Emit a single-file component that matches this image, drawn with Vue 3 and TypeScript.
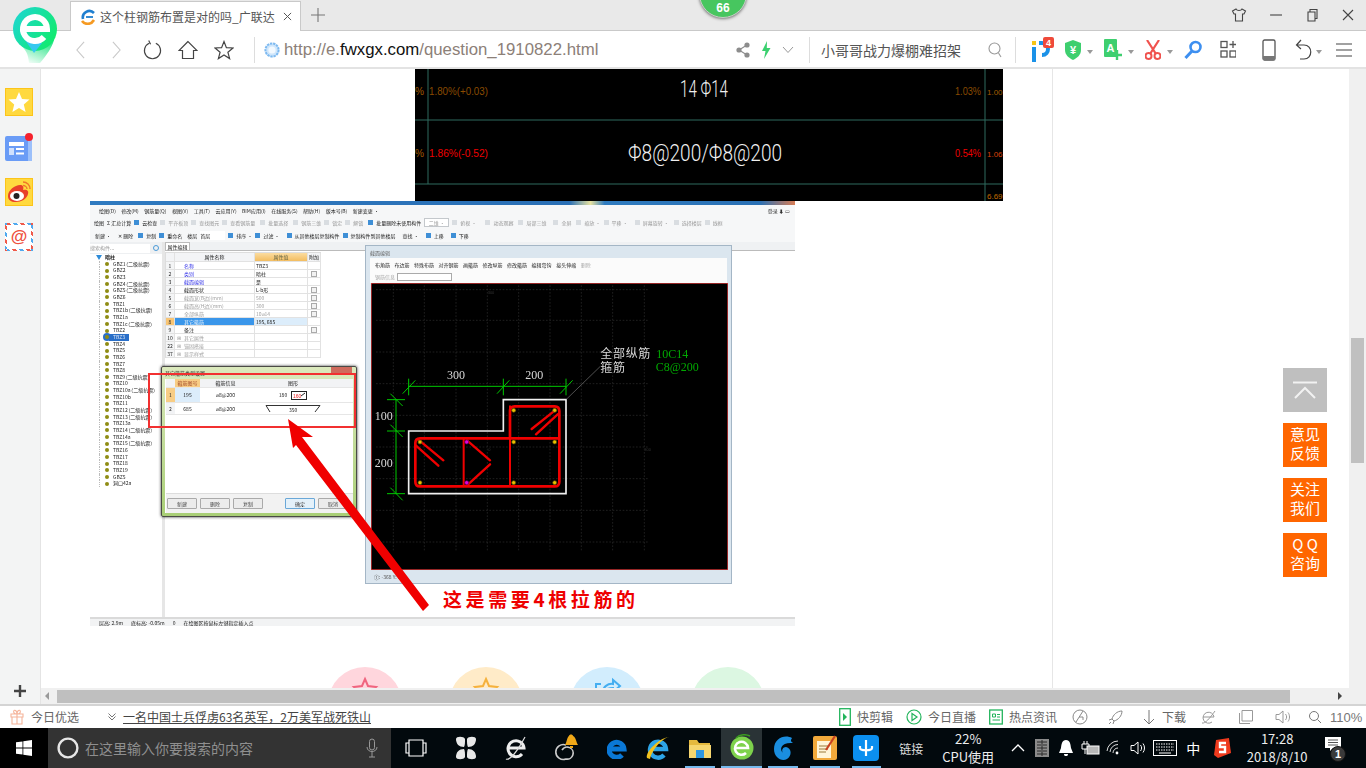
<template>
  <div class="browser">
    <!-- tab strip -->
    <header class="tabstrip">
      <div class="tab">
        <svg class="favicon" viewBox="0 0 16 16" width="16" height="16">
          <path d="M3 10A6.5 6.5 0 0 1 14 4" fill="none" stroke="#1f7fd0" stroke-width="2.6" />
          <path d="M2 12C5 16 11 16 14 11" fill="none" stroke="#f59a23" stroke-width="2.6" />
          <path d="M6 8H13" stroke="#1f7fd0" stroke-width="1.8" />
        </svg>
        <span class="tab-title">这个柱钢筋布置是对的吗_广联达</span>
        <svg class="tab-x" viewBox="0 0 10 10" width="9" height="9"><path d="M1 1L9 9M9 1L1 9" stroke="#555" stroke-width="1.1" /></svg>
      </div>
      <svg class="tab-plus" viewBox="0 0 14 14" width="14" height="14"><path d="M7 0V14M0 7H14" stroke="#777" stroke-width="1.1" /></svg>
      <div class="win-btns">
        <svg viewBox="0 0 16 16" width="16" height="16"><path d="M5 2L1.5 4 3 7H4.5V14H11.5V7H13L14.5 4 11 2C10 4 6 4 5 2Z" fill="none" stroke="#444" stroke-width="1.1" /></svg>
        <svg viewBox="0 0 14 14" width="14" height="14"><path d="M1 7H13" stroke="#444" stroke-width="1.1" /></svg>
        <svg viewBox="0 0 14 14" width="14" height="14"><path d="M3 4H10V13H3ZM5 4V1.5H12V10.5H10" fill="none" stroke="#444" stroke-width="1.1" /></svg>
        <svg viewBox="0 0 14 14" width="14" height="14"><path d="M2 2L12 12M12 2L2 12" stroke="#444" stroke-width="1.1" /></svg>
      </div>
    </header>

    <!-- address bar -->
    <div class="toolbar">
      <div class="nav-btns">
        <svg viewBox="0 0 12 20" width="11" height="18"><path d="M10 1L2 10 10 19" fill="none" stroke="#c8c8c8" stroke-width="1.2" /></svg>
        <svg viewBox="0 0 12 20" width="11" height="18"><path d="M2 1L10 10 2 19" fill="none" stroke="#c8c8c8" stroke-width="1.2" /></svg>
        <svg viewBox="0 0 20 22" width="19" height="21"><path d="M6.5 4.5A8.5 8.5 0 1 0 13.5 4.5M6 1.5L8 5.5" fill="none" stroke="#444" stroke-width="1.2" /></svg>
        <svg viewBox="0 0 20 20" width="20" height="20"><path d="M10 1.5L1 10.5H4.5V18.5H15.5V10.5H19Z" fill="none" stroke="#444" stroke-width="1.2" /></svg>
        <svg viewBox="0 0 20 20" width="20" height="20"><path d="M10 1.5L12.4 7.6 19 8 13.9 12.2 15.6 18.6 10 15 4.4 18.6 6.1 12.2 1 8 7.6 7.6Z" fill="none" stroke="#444" stroke-width="1.2" /></svg>
      </div>
      <span class="divider url-divider"></span>
      <svg class="globe" viewBox="0 0 16 16" width="16" height="16">
        <circle cx="8" cy="8" r="6.6" fill="#cfe6fb" stroke="#7db9f0" stroke-width="2" stroke-dasharray="2.4 .8" />
        <circle cx="8" cy="8" r="3.6" fill="#f2f9ff" />
      </svg>
      <div class="url">http://e.<b>fwxgx.com</b>/question_1910822.html</div>

      <div class="tools-mid">
        <svg viewBox="0 0 14 16" width="14" height="16"><g fill="#8d8d8d"><circle cx="3" cy="8" r="2.6" /><circle cx="11" cy="3" r="2.6" /><circle cx="11" cy="13" r="2.6" /></g><path d="M3 8L11 3M3 8L11 13" stroke="#8d8d8d" stroke-width="1.2" /></svg>
        <svg viewBox="0 0 10 18" width="10" height="18"><path d="M6 0L1 10H4.5L3 18 9.5 7H5.8Z" fill="#3bd06f" /></svg>
        <svg viewBox="0 0 12 8" width="12" height="8"><path d="M1 1L6 6.5 11 1" fill="none" stroke="#999" /></svg>
        <span class="divider"></span>
        <span class="hot-search">小哥哥战力爆棚难招架</span>
        <svg class="mag" viewBox="0 0 14 16" width="14" height="16"><circle cx="6.5" cy="6.5" r="5.5" fill="none" stroke="#999" stroke-width="1.1" /><path d="M10.5 11L13 15" stroke="#999" stroke-width="1.1" /></svg>
        <span class="divider"></span>
      </div>

      <div class="tools-ext">
        <span class="ext ip">
          <svg viewBox="0 0 24 26" width="24" height="26">
            <rect x="2" y="4" width="4" height="4" fill="#f7c514" />
            <rect x="2" y="10" width="4" height="15" fill="#1b92e8" />
            <path d="M9 6H12C20 6 20 18 12 18" fill="none" stroke="#1b92e8" stroke-width="4" />
            <rect x="13" y="0" width="11" height="11" rx="2" fill="#ef4a3a" />
            <text x="18.5" y="9" class="badge-4">4</text>
          </svg>
        </span>
        <span class="ext">
          <svg viewBox="0 0 16 20" width="16" height="20"><path d="M8 0L16 3V10C16 15 12 18 8 20 4 18 0 15 0 10V3Z" fill="#3ecf6f" /><text x="8" y="14" class="yen">¥</text></svg>
          <i class="caret"></i>
        </span>
        <span class="ext">
          <svg viewBox="0 0 18 22" width="18" height="22"><rect x="0" y="0" width="13" height="18" rx="1" fill="#3ecf6f" /><text x="6.5" y="13" class="yen">A</text><path d="M13 11V21M8 16H18" stroke="#3ecf6f" stroke-width="2.4" /></svg>
          <i class="caret"></i>
        </span>
        <span class="ext">
          <svg viewBox="0 0 16 20" width="16" height="20"><path d="M2 0L11 14M14 0L5 14" stroke="#f0524e" stroke-width="2.2" /><circle cx="3.5" cy="16" r="3" fill="none" stroke="#f0524e" stroke-width="2" /><circle cx="12.5" cy="16" r="3" fill="none" stroke="#f0524e" stroke-width="2" /></svg>
          <i class="caret"></i>
        </span>
        <span class="ext">
          <svg viewBox="0 0 18 20" width="18" height="20"><circle cx="11.5" cy="7" r="5" fill="none" stroke="#3d8ff0" stroke-width="2.6" /><path d="M8 11L1.5 18" stroke="#3d8ff0" stroke-width="3" /></svg>
        </span>
        <span class="ext apps">
          <svg viewBox="0 0 16 20" width="16" height="20"><g fill="none" stroke="#555" stroke-width="1.3"><rect x="1" y="1.5" width="6" height="6" /><rect x="1" y="11" width="6" height="6" /><rect x="10" y="11" width="6" height="6" /><path d="M13 1V8M9.5 4.5H16.5" /></g></svg>
        </span>
        <span class="ext phone">
          <svg viewBox="0 0 14 22" width="14" height="22"><rect x="1" y="1" width="12" height="20" rx="1.6" fill="none" stroke="#555" stroke-width="1.3" /><rect x="1" y="17" width="12" height="4" fill="#777" /></svg>
        </span>
        <span class="ext undo">
          <svg viewBox="0 0 18 22" width="18" height="22"><path d="M6 1L1.5 6 6 10M2 6H9C18 6 18 20 9 20H5" fill="none" stroke="#444" stroke-width="1.2" /></svg>
          <i class="caret"></i>
        </span>
        <span class="ext menu">
          <svg viewBox="0 0 16 16" width="16" height="16"><path d="M0 2H16M0 8H16M0 14H16" stroke="#444" stroke-width="1.2" /></svg>
        </span>
      </div>
    </div>

    <!-- floats over the chrome -->
    <svg class="logo" viewBox="0 0 46 56" width="46" height="56">
      <defs>
        <linearGradient id="logoFill" x1="0" y1="0" x2="1" y2="0.6">
          <stop offset="0" stop-color="#1fd5d8" />
          <stop offset="1" stop-color="#12ea70" />
        </linearGradient>
        <linearGradient id="tailFill" x1="0.7" y1="0" x2="0.1" y2="1">
          <stop offset="0" stop-color="#2ee58a" />
          <stop offset="1" stop-color="#2ee58a" stop-opacity="0" />
        </linearGradient>
      </defs>
      <path d="M9 38C14 44 16 46 17 56H28C35 48 40 40 42 33Z" fill="url(#tailFill)" />
      <circle cx="23" cy="22" r="22" fill="url(#logoFill)" />
      <path d="M13 33L22 46 30 36Z" fill="#37c8ef" />
      <path d="M12 22H35A12 12 0 1 0 32 30" fill="none" stroke="#fff" stroke-width="6" />
    </svg>
    <div class="level-badge">66</div>

    <div class="body">
      <!-- left rail -->
      <aside class="rail">
        <div class="rail-icons">
          <svg class="tile" viewBox="0 0 28 28" width="28" height="28"><rect x=".5" y=".5" width="27" height="27" fill="#ffd93f" stroke="#fcc419" /><path d="M14 4L17 11 24.5 11.6 18.8 16.4 20.6 24 14 20 7.4 24 9.2 16.4 3.5 11.6 11 11Z" fill="#fff" /></svg>
          <svg class="tile" viewBox="0 0 28 28" width="28" height="28"><rect x="0" y="3" width="27" height="25" rx="2" fill="#6a9cf6" /><rect x="23" y="5" width="4" height="23" fill="#9cc0fa" /><rect x="4" y="9" width="15" height="4" fill="#fff" /><rect x="4" y="15" width="5" height="7" fill="#cfe0fd" /><path d="M11 16H19M11 20.5H19" stroke="#fff" stroke-width="2" /><circle cx="24" cy="4" r="4" fill="#f5222d" /></svg>
          <svg class="tile" viewBox="0 0 28 28" width="28" height="28"><rect x=".5" y=".5" width="27" height="27" fill="#ffd93f" stroke="#fcc419" /><path d="M3 18C3 12 10 7 15 7 18 7 19 9 18 12 22 11 24 13 23 16 22 21 16 24 11 24 6 24 3 22 3 18Z" fill="#e8402a" /><ellipse cx="12" cy="18" rx="7" ry="5" fill="#fff" /><circle cx="11.5" cy="18" r="3" fill="#222" /><path d="M18 4C22 4 25 7 25 11M18 7.5C20 7.5 22 9 22 11" fill="none" stroke="#f0782a" stroke-width="1.4" /></svg>
          <div class="airmail">@</div>
        </div>
        <svg class="rail-plus" viewBox="0 0 12 12" width="12" height="12"><path d="M6 0V12M0 6H12" stroke="#444" stroke-width="2.4" /></svg>
      </aside>

      <div class="right-col">
        <div class="viewport">
          <main class="page">
            <div class="column">
              <!-- drawing photo at the top of the article -->
              <svg class="cad-top" viewBox="0 0 588 132" width="588" height="132">
                <rect width="588" height="132" fill="#000" />
                <path d="M13 0V115M570 0V132M0 51H588M0 115H588" stroke="#2f6b5f" stroke-width="1" />
                <g class="cad-small">
                  <text x="0" y="26" fill="#a25c00" textLength="9" lengthAdjust="spacingAndGlyphs">%</text>
                  <text x="14" y="26" fill="#8a4b00" textLength="59" lengthAdjust="spacingAndGlyphs">1.80%(+0.03)</text>
                  <text x="0" y="88" fill="#a25c00" textLength="9" lengthAdjust="spacingAndGlyphs">%</text>
                  <text x="14" y="88" fill="#ee0000" textLength="59" lengthAdjust="spacingAndGlyphs">1.86%(-0.52)</text>
                  <text x="540" y="26" fill="#8a4b00" textLength="26" lengthAdjust="spacingAndGlyphs">1.03%</text>
                  <text x="540" y="88" fill="#ee0000" textLength="26" lengthAdjust="spacingAndGlyphs">0.54%</text>
                  <text x="572" y="26" fill="#a25c00" class="cad-edge">1.00</text>
                  <text x="572" y="88" fill="#d8400a" class="cad-edge">1.06</text>
                  <text x="572" y="130" fill="#c06a00" class="cad-edge">6.69</text>
                </g>
                <g class="cad-big">
                  <text x="265" y="28" textLength="48" lengthAdjust="spacingAndGlyphs">14 Φ14</text>
                  <text x="213" y="92" textLength="154" lengthAdjust="spacingAndGlyphs">Φ8@200/Φ8@200</text>
                </g>
              </svg>

              <div class="shot-wrap">
                <!-- screenshot of the rebar software -->
                <div class="shot">
                  <div class="sw-title"></div>
                  <div class="sw-row sw-menu">
                    <span v-for="m in menuItems" :key="m">{{ m }}</span>
                    <span class="sw-login">登录 ⬇ ▭</span>
                  </div>
                  <div class="sw-row sw-tools">
                    <span v-for="t in toolItems" :key="t.label" :class="t.cls">{{ t.label }}</span>
                  </div>
                  <div class="sw-row sw-tools sw-edit">
                    <span v-for="t in editItems" :key="t.label" :class="t.cls">{{ t.label }}</span>
                  </div>
                  <div class="sw-body">
                    <div class="sw-left">
                      <div class="sw-search"><span>搜索构件...</span><i></i></div>
                      <ul class="tree">
                        <li class="tree-root"><b></b>暗柱</li>
                        <li v-for="n in treeRows" :key="n.id" :class="{ sel: n.name === 'TBZ3' }"><i></i><span>{{ n.name }}</span></li>
                      </ul>
                    </div>
                    <div class="sw-main">
                      <div class="prop-tab"><span>属性编辑</span></div>
                      <div class="prop-table">
                        <div class="prop-row prop-head"><span></span><span>属性名称</span><span class="head-val">属性值</span><span>附加</span></div>
                        <div v-for="r in propRows" :key="r.no" class="prop-row" :class="r.kind">
                          <span class="prop-no">{{ r.no }}</span>
                          <span class="prop-name"><em v-if="r.group">⊞</em>{{ r.name }}</span>
                          <span class="prop-val">{{ r.value }}</span>
                          <span class="prop-chk"><i v-if="r.check"></i></span>
                        </div>
                      </div>
                    </div>
                  </div>
                  <div class="sw-status"><span>层高: 2.9m</span><span>底标高: -0.05m</span><span>0</span><span>在绘图区按鼠标左键指定插入点</span></div>

                  <!-- stirrup type dialog -->
                  <div class="dialog">
                    <div class="dialog-title">其它箍筋类型设置<i></i></div>
                    <div class="dialog-inner">
                      <div class="st-row st-head"><span></span><span class="st-hl">箍筋图号</span><span>箍筋信息</span><span>图形</span></div>
                      <div class="st-row st-one">
                        <span class="st-idx">1</span><span class="st-no">195</span><span>⌀8@200</span>
                        <span class="st-shape"><small>180</small><svg viewBox="0 0 16 9" width="16" height="9"><rect x=".5" y=".5" width="15" height="8" fill="#fff" stroke="#222" /><path d="M10 5L14 2" stroke="#222" /><text x="2" y="7" class="st-red">160</text></svg></span>
                      </div>
                      <div class="st-row st-two">
                        <span class="st-idx">2</span><span class="st-no">685</span><span>⌀8@200</span>
                        <span class="st-shape st-hook"><svg viewBox="0 0 56 9" width="56" height="9"><path d="M5 8L1 1.5H55L50 8" fill="none" stroke="#333" stroke-width="1" /></svg><small>350</small></span>
                      </div>
                      <div class="dialog-space"></div>
                      <div class="dialog-btns">
                        <button>新建</button><button>删除</button><button>复制</button>
                        <button class="ok">确定</button><button>取消</button>
                      </div>
                    </div>
                  </div>

                  <!-- section editor window -->
                  <div class="section-win">
                    <div class="section-title">截面编辑</div>
                    <div class="section-tools">
                      <div class="section-row">
                        <span v-for="t in sectionTools" :key="t" :class="{ muted: t === '删除' }">{{ t }}</span>
                      </div>
                      <div class="section-row section-row2"><span class="muted">钢筋信息</span><i></i></div>
                    </div>
                    <svg class="section-canvas" viewBox="30 128 1071 861" width="357" height="287">
                      <rect x="30" y="128" width="1071" height="861" fill="#000" stroke="#e23a3a" stroke-width="4" />
                      <g stroke="#3a3a3a" stroke-width="1.6" stroke-dasharray="5 5">
                        <path v-for="x in gridX" :key="'x' + x" :d="`M${x} 135V935`" />
                        <path v-for="y in gridY" :key="'y' + y" :d="`M45 ${y}H865`" />
                      </g>
                      <g fill="#333" class="cad-tiny"><text x="380" y="162">300</text><text x="850" y="632">300</text><text x="382" y="632">0</text></g>
                      <!-- dimension lines -->
                      <g stroke="#00c800" stroke-width="3" fill="none">
                        <path d="M143 438H615M143 415V465M427 415V465M615 415V465M125 460L163 420M408 460L445 420M597 460L635 420" />
                        <path d="M105 478V760M78 478H132M78 572H132M78 760H132M88 460L125 497M88 553L125 590M88 742L125 780" />
                      </g>
                      <path d="M143 572H427V478H615V760H143Z" fill="none" stroke="#f0f0f0" stroke-width="5" />
                      <path d="M617 476L718 378" stroke="#777" stroke-width="2" />
                      <!-- rebars -->
                      <g stroke="#f00000" fill="none" stroke-linecap="round">
                        <path d="M447 594V512Q447 498 461 498H581Q595 498 595 512V724Q595 738 581 738H177Q163 738 163 724V608Q163 594 177 594H595" stroke-width="8" />
                        <path d="M447 498V738M308 594V738" stroke-width="6" />
                        <path d="M172 598L247 660M165 616L232 676M582 510L512 566M590 522L525 582M318 600L387 660M318 735L387 672" stroke-width="7" />
                      </g>
                      <g fill="#e8c000" stroke="#5a4a00" stroke-width="2">
                        <circle v-for="d in yellowDots" :key="d.join()" :cx="d[0]" :cy="d[1]" r="6" />
                      </g>
                      <g fill="#e000e0" stroke="#600060" stroke-width="2"><circle cx="317" cy="605" r="6" /><circle cx="317" cy="727" r="6" /></g>
                      <g class="cad-label" fill="#d8d8d8">
                        <text x="285" y="416" text-anchor="middle">300</text>
                        <text x="520" y="416" text-anchor="middle">200</text>
                        <text x="68" y="538" text-anchor="middle">100</text>
                        <text x="68" y="680" text-anchor="middle">200</text>
                        <text x="718" y="354" class="cad-cjk">全部纵筋</text>
                        <text x="718" y="394" class="cad-cjk">箍筋</text>
                      </g>
                      <g class="cad-label" fill="#00a800">
                        <text x="886" y="354">10C14</text>
                        <text x="884" y="392">C8@200</text>
                      </g>
                    </svg>
                    <div class="section-status">①: -368 Y: 80</div>
                  </div>

                  <!-- red markup drawn on the screenshot -->
                  <div class="markup-box"></div>
                  <svg class="markup-arrow" viewBox="0 0 705 425" width="705" height="425">
                    <polygon points="198,218 223,236 212,236 339,404 333,410 206,244 203,247" fill="#f00000" />
                  </svg>
                </div>
                <div class="markup-text">这是需要4根拉筋的</div>
              </div>

              <div class="share-row">
                <div class="share share-pink"><svg viewBox="0 0 30 30" width="30" height="30"><path d="M15 3L18 10 26 11 20 16 22 24H8L10 16 4 11 12 10Z" fill="none" stroke="#f0657f" stroke-width="2" /></svg></div>
                <div class="share share-amber"><svg viewBox="0 0 30 30" width="30" height="30"><path d="M15 3L18 10 26 11 20 16 22 24H8L10 16 4 11 12 10Z" fill="none" stroke="#f5b13d" stroke-width="2" /></svg></div>
                <div class="share share-blue"><svg viewBox="0 0 30 30" width="30" height="30"><path d="M9 8H4V24H24V18M10 17C11 11 16 7 21 8V4L28 10 21 16V12C16 12 13 13 10 17Z" fill="none" stroke="#45aef0" stroke-width="2" /></svg></div>
                <div class="share share-green"></div>
              </div>
            </div>

            <nav class="floats">
              <a class="float-top"><svg viewBox="0 0 24 18" width="24" height="18"><path d="M0 1.5H24M2 17L12 7 22 17" fill="none" stroke="#f2f2f2" stroke-width="2" /></svg></a>
              <a>意见<br />反馈</a>
              <a>关注<br />我们</a>
              <a>Q Q<br />咨询</a>
            </nav>
          </main>
          <div class="vscroll"><div class="vthumb"></div></div>
        </div>
        <div class="hscroll">
          <i class="arrow-l"></i>
          <div class="hthumb"></div>
          <i class="arrow-r"></i>
        </div>
      </div>
    </div>

    <!-- status bar -->
    <footer class="statusbar">
      <svg class="gift" viewBox="0 0 14 16" width="14" height="16"><path d="M1 5H13V8H1ZM2 8V15H12V8M7 5V15M7 5C4 5 3 3 4 1.5 5 .5 7 2 7 5 7 2 9 .5 10 1.5 11 3 10 5 7 5Z" fill="none" stroke="#f5b49a" stroke-width="1.1" /></svg>
      <span class="today">今日优选</span>
      <svg class="news-chev" viewBox="0 0 8 8" width="8" height="8"><path d="M.5 .5L4 4 7.5 .5M.5 3.5L4 7 7.5 3.5" fill="none" stroke="#666" stroke-width=".9" /></svg>
      <a class="news">一名中国士兵俘虏63名英军，2万美军战死铁山</a>
      <div class="status-right">
        <span class="st-item">
          <svg viewBox="0 0 12 18" width="12" height="18"><rect x=".7" y=".7" width="10.6" height="16.6" fill="none" stroke="#23b45c" stroke-width="1.3" /><path d="M4 5L8 9 4 13Z" fill="#23b45c" /></svg>
          快剪辑
        </span>
        <span class="st-item">
          <svg viewBox="0 0 16 16" width="16" height="16"><circle cx="8" cy="8" r="7" fill="none" stroke="#23b45c" stroke-width="1.2" /><path d="M6 4.5L11 8 6 11.5Z" fill="none" stroke="#23b45c" stroke-width="1.2" /></svg>
          今日直播
        </span>
        <span class="st-item">
          <svg viewBox="0 0 14 16" width="14" height="16"><rect x=".7" y="1" width="12.6" height="14" fill="none" stroke="#23b45c" stroke-width="1.3" /><path d="M3.5 5H6.5V8H3.5ZM8 5.5H11M8 8H11M3.5 11H11" fill="none" stroke="#23b45c" /></svg>
          热点资讯
        </span>
        <svg class="st-gray g1" viewBox="0 0 16 16" width="16" height="16"><circle cx="8" cy="8" r="7" fill="none" stroke="#888" /><path d="M4 13L11 2M7 8H11V11" fill="none" stroke="#888" /></svg>
        <svg class="st-gray g2" viewBox="0 0 16 16" width="16" height="16"><path d="M14 2C9 2 5 6 4 10L6 12C10 11 14 7 14 2ZM4 10L1 11M6 12L5 15M3 13L1 15" fill="none" stroke="#888" /></svg>
        <span class="st-item st-down">
          <svg viewBox="0 0 12 16" width="12" height="16"><path d="M6 1V15M1 10L6 15 11 10" fill="none" stroke="#777" /></svg>
          下载
        </span>
        <svg class="st-gray g3" viewBox="0 0 16 16" width="16" height="16"><path d="M2 8H13A5.5 5.5 0 1 0 11 13M1 14C4 15 9 9 14 2" fill="none" stroke="#999" /></svg>
        <svg class="st-gray g4" viewBox="0 0 14 14" width="14" height="14"><path d="M3 .5H13.5V11H3ZM.5 3V13.5H11" fill="none" stroke="#999" /></svg>
        <svg class="st-gray g5" viewBox="0 0 16 16" width="16" height="16"><path d="M1 5.5H4L8 2V14L4 10.5H1ZM10.5 5C12 7 12 9 10.5 11M13 3.5C15 6 15 10 13 12.5" fill="none" stroke="#999" /></svg>
        <svg class="st-gray g6" viewBox="0 0 14 14" width="14" height="14"><circle cx="6" cy="6" r="4.5" fill="none" stroke="#777" /><path d="M9.5 9.5L13 13" stroke="#777" /></svg>
        <span class="zoom-level">110%</span>
      </div>
    </footer>

    <!-- windows taskbar -->
    <div class="taskbar">
      <div class="start">
        <svg viewBox="0 0 16 16" width="16" height="16"><path d="M0 2.3L6.5 1.4V7.6H0ZM7.3 1.3L16 0V7.6H7.3ZM0 8.4H6.5V14.6L0 13.7ZM7.3 8.4H16V16L7.3 14.7Z" fill="#fff" /></svg>
      </div>
      <div class="cortana">
        <svg viewBox="0 0 22 22" width="22" height="22"><circle cx="11" cy="11" r="9.4" fill="none" stroke="#e6e6e6" stroke-width="2.4" /></svg>
        <span>在这里输入你要搜索的内容</span>
        <svg class="mic" viewBox="0 0 12 20" width="12" height="20"><rect x="3.5" y="1" width="5" height="11" rx="2.5" fill="none" stroke="#999" /><path d="M1 9C1 15 11 15 11 9M6 14V19M3 19H9" fill="none" stroke="#999" /></svg>
      </div>
      <div class="pins-a">
        <span class="pin"><svg viewBox="0 0 22 18" width="22" height="18"><path d="M4 1H18V17H4ZM4 4H1V14H4M18 4H21V14H18" fill="#02090d" stroke="#fff" stroke-width="1.2" /></svg></span>
        <span class="pin"><svg viewBox="0 0 22 24" width="22" height="24"><g fill="#e8e8e8"><path d="M1 3C1 0 9 0 10 3 10 7 10 9 9 11 4 11 1 8 1 3Z" /><path d="M12 3C13 0 21 0 21 3 21 8 18 11 13 11 12 9 12 7 12 3Z" /><path d="M1 21C1 16 4 13 9 13 10 15 10 17 10 21 9 24 1 24 1 21Z" /><path d="M13 13C18 13 21 16 21 21 21 24 13 24 12 21 12 17 12 15 13 13Z" /></g></svg></span>
        <span class="pin"><svg viewBox="0 0 22 26" width="22" height="26"><path d="M3 13H19A8 8 0 1 0 17 19" fill="none" stroke="#eee" stroke-width="3" /><path d="M1 24C5 26 13 15 20 2" fill="none" stroke="#ddd" stroke-width="1.2" /></svg></span>
        <span class="pin pin-bell">
          <svg viewBox="0 0 28 30" width="28" height="30"><path d="M14 12A7.5 7.5 0 1 0 14 26 6 6 0 1 0 10 17" fill="none" stroke="#ccc" stroke-width="1.6" /><path d="M17 3C17 1 21 1 21 3 24 4 24 9 26 12H13C15 9 15 4 17 3ZM18 13H21V15H18Z" fill="#f0a818" /></svg>
        </span>
      </div>
      <div class="pins-b">
        <span class="pin"><svg viewBox="0 0 20 22" width="20" height="22"><path d="M3 12H17A7.5 7.5 0 1 0 15 18" fill="none" stroke="#0a78d7" stroke-width="5" /></svg></span>
        <span class="pin"><svg viewBox="0 0 26 26" width="26" height="26"><path d="M6 14H21A8 8 0 1 0 19 20" fill="none" stroke="#2da4e6" stroke-width="4.4" /><path d="M2 23C0 17 14 3 24 2 20 2 8 12 5 24Z" fill="#f2c21d" /></svg></span>
        <span class="pin run"><svg viewBox="0 0 24 22" width="24" height="22"><path d="M1 3H9L11 6H22V8H1Z" fill="#e5b93e" /><rect x="1" y="8" width="22" height="13" fill="#f6d66f" /><rect x="8" y="13" width="8" height="8" fill="#2f96e0" /></svg></span>
        <span class="pin run active"><svg viewBox="0 0 24 28" width="24" height="28"><circle cx="12" cy="14" r="11.5" fill="#7ed24c" /><path d="M6 14H18A6.5 6.5 0 1 0 16 19" fill="none" stroke="#fff" stroke-width="2.6" /><path d="M6 4C10 0 16 0 20 2" fill="none" stroke="#3a9a20" stroke-width="1.4" /></svg></span>
        <span class="pin run"><svg viewBox="0 0 24 28" width="24" height="28"><path d="M21 4C14 0 3 4 3 15 3 24 11 28 16 25 21 22 21 14 15 13 12 13 10 16 12 19 8 15 10 8 22 9 19 7 20 6 21 4Z" fill="#1a8ee0" /></svg></span>
        <span class="pin run"><svg viewBox="0 0 26 26" width="26" height="26"><rect x="1" y="1" width="24" height="24" rx="2" fill="#f2a93b" /><rect x="5" y="6" width="14" height="17" fill="#fff5d8" /><path d="M7 11H16M7 14H16M7 17H14" stroke="#9a7a3a" /><path d="M23 1L14 15" stroke="#c8411f" stroke-width="2.2" /></svg></span>
        <span class="pin run"><svg viewBox="0 0 26 26" width="26" height="26"><rect width="26" height="26" rx="4" fill="#0b8fef" /><path d="M13 5V21M7 13V11M19 13V11M7 13C7 16 19 16 19 13" fill="none" stroke="#fff" stroke-width="2.2" /></svg></span>
      </div>
      <div class="tray">
        <span class="tray-text">链接</span>
        <span class="tray-cpu">22%<br />CPU使用</span>
        <span><svg viewBox="0 0 14 8" width="14" height="8"><path d="M1 7L7 1 13 7" fill="none" stroke="#fff" stroke-width="1.3" /></svg></span>
        <span><svg viewBox="0 0 14 18" width="14" height="18"><rect width="14" height="18" fill="#8b8b8b" /><path d="M2 3H12M2 6H6M8 6H12M2 9H12M2 12H6M8 12H12M2 15H12M7 1V17" stroke="#2a2a2a" /></svg></span>
        <span><svg viewBox="0 0 14 16" width="14" height="16"><path d="M7 0C11 0 11.5 4 12 8L14 13H0L2 8C2.5 4 3 0 7 0ZM5 14H9C9 17 5 17 5 14Z" fill="#fff" /></svg></span>
        <span><svg viewBox="0 0 20 14" width="20" height="14"><path d="M4 0V3M7 0V3M2 3H9V8H2ZM5 8V13" stroke="#fff" fill="none" /><rect x="7" y="5" width="12" height="8" fill="#b8b8b8" stroke="#fff" /></svg></span>
        <span><svg viewBox="0 0 16 16" width="16" height="16"><path d="M1 11A11 11 0 0 1 12 1M4 12A8 8 0 0 1 12 4.5M7 13A5 5 0 0 1 12 8" fill="none" stroke="#ddd" /><circle cx="11" cy="13" r="1.4" fill="#fff" /></svg></span>
        <span><svg viewBox="0 0 16 16" width="16" height="16"><path d="M1 5.5H4L8 2V14L4 10.5H1ZM10.5 5C12 7 12 9 10.5 11M13 3.5C15 6 15 10 13 12.5" fill="none" stroke="#fff" /></svg></span>
        <span><svg viewBox="0 0 24 16" width="24" height="16"><rect x=".5" y=".5" width="23" height="15" fill="none" stroke="#fff" /><path d="M3 4H21M3 7H21M3 10H21" stroke="#fff" stroke-dasharray="1.5 1" /><path d="M6 13H18" stroke="#fff" /></svg></span>
        <span class="tray-ime">中</span>
        <span><svg viewBox="0 0 18 20" width="18" height="20"><path d="M3 2L16 0 18 15 5 20 1 17Z" fill="#ef3a1d" /><path d="M13 5H7V9H12V14H6" fill="none" stroke="#fff" stroke-width="2.4" /></svg></span>
        <span class="tray-clock">17:28<br />2018/8/10</span>
        <span class="tray-note">
          <svg viewBox="0 0 16 14" width="16" height="14"><path d="M0 0H16V11H8L5 14V11H0Z" fill="#fff" /><path d="M3 3H13M3 5.5H13M3 8H13" stroke="#555" /></svg>
          <b>1</b>
        </span>
      </div>
    </div>
  </div>
</template>

<script setup lang="ts">
interface TreeRow {
  id: number
  name: string
}

interface PropRow {
  no: number
  name: string
  value: string
  kind: string
  check?: boolean
  group?: boolean
}

interface ToolItem {
  label: string
  cls?: string
}

const menuItems: string[] = [
  "绘图(D)", "修改(M)", "钢筋量(Q)", "视图(V)", "工具(T)", "云应用(Y)",
  "BIM应用(I)", "在线服务(S)", "帮助(H)", "版本号(B)", "新建变更 ·",
]

const toolItems: ToolItem[] = [
  { label: "绘图" },
  { label: "Σ 汇总计算" },
  { label: "云检查", cls: "ico ico-blue" },
  { label: "平齐板顶", cls: "ico muted" },
  { label: "查找图元", cls: "ico muted" },
  { label: "查看钢筋量", cls: "ico muted" },
  { label: "批量选择", cls: "ico muted m2" },
  { label: "钢筋三维", cls: "ico muted m2" },
  { label: "锁定", cls: "ico muted" },
  { label: "解锁", cls: "ico muted" },
  { label: "批量删除未使用构件", cls: "ico ico-blue m2" },
  { label: "二维 ·", cls: "boxed muted" },
  { label: "俯视 ·", cls: "ico muted" },
  { label: "动态观察", cls: "ico muted m6" },
  { label: "局部三维", cls: "ico muted m2" },
  { label: "全屏", cls: "ico muted m4" },
  { label: "缩放 ·", cls: "ico muted m2" },
  { label: "平移 ·", cls: "ico muted" },
  { label: "屏幕旋转 ·", cls: "ico muted m4" },
  { label: "选择楼层", cls: "ico muted m2" },
  { label: "线框", cls: "ico muted" },
]

const editItems: ToolItem[] = [
  { label: "新建 ·" },
  { label: "✕ 删除", cls: "m4" },
  { label: "复制", cls: "ico ico-blue m2" },
  { label: "重命名", cls: "ico ico-blue" },
  { label: "楼层", cls: "m2" },
  { label: "首层", cls: "select" },
  { label: "排序 ·", cls: "ico ico-blue" },
  { label: "过滤 ·", cls: "ico ico-blue" },
  { label: "从其他楼层复制构件", cls: "ico ico-blue m4" },
  { label: "复制构件到其他楼层", cls: "ico ico-blue" },
  { label: "查找 ·", cls: "m4" },
  { label: "上移", cls: "ico ico-blue m4" },
  { label: "下移", cls: "ico ico-blue m4" },
]

const treeNames: string[] = [
  "GBZ1（二级抗震）", "GBZ2", "GBZ3", "GBZ4（二级抗震）", "GBZ5（二级抗震）", "GBZ6", "TBZ1",
  "TBZ1b（二级抗震）", "TBZ1a", "TBZ1c（二级抗震）", "TBZ2", "TBZ3", "TBZ4", "TBZ5", "TBZ6", "TBZ7", "TBZ8",
  "TBZ9（二级抗震）", "TBZ10", "TBZ10a（二级抗震）", "TBZ10b", "TBZ11", "TBZ12（二级抗震）", "TBZ13（二级抗震）",
  "TBZ13a", "TBZ14（二级抗震）", "TBZ14a", "TBZ15（二级抗震）", "TBZ16", "TBZ17", "TBZ18", "TBZ19", "GBZ5", "洞口42a",
]

const treeRows: TreeRow[] = treeNames.map((name, id) => ({ id, name }))

const propRows: PropRow[] = [
  { no: 1, name: "名称", value: "TBZ3", kind: "blue" },
  { no: 2, name: "类别", value: "暗柱", kind: "blue", check: true },
  { no: 3, name: "截面编辑", value: "是", kind: "blue" },
  { no: 4, name: "截面形状", value: "L-b形", kind: "dark", check: true },
  { no: 5, name: "截面宽(B边)(mm)", value: "500", kind: "gray", check: true },
  { no: 6, name: "截面高(H边)(mm)", value: "300", kind: "gray", check: true },
  { no: 7, name: "全部纵筋", value: "10⌀14", kind: "gray", check: true },
  { no: 8, name: "其它箍筋", value: "195, 685", kind: "picked" },
  { no: 9, name: "备注", value: "", kind: "dark", check: true },
  { no: 10, name: "其它属性", value: "", kind: "gray", group: true },
  { no: 22, name: "锚固搭接", value: "", kind: "gray", group: true },
  { no: 37, name: "显示样式", value: "", kind: "gray", group: true },
]

const sectionTools: string[] = ["布角筋", "布边筋", "特殊布筋", "对齐钢筋", "画箍筋", "修改纵筋", "修改箍筋", "编辑弯钩", "接头伸缩", "删除"]

const gridX: number[] = [97, 190, 285, 379, 473, 567, 661, 755, 850]
const gridY: number[] = [148, 240, 335, 430, 525, 620, 715, 810, 905]
const yellowDots: number[][] = [[177, 605], [177, 727], [458, 510], [581, 510], [458, 605], [581, 605], [458, 727], [581, 727]]
</script>

<style>
html,
body {
  margin: 0;
  overflow: hidden;
  background: #fff;
}
</style>

<style scoped>
.browser {
  position: relative;
  width: 1366px;
  height: 768px;
  display: flex;
  flex-direction: column;
  overflow: hidden;
  font-family: "Noto Sans CJK SC", "Liberation Sans", sans-serif;
  color: #555;
}

svg {
  display: block;
  flex: none;
}

/* tab strip */
.tabstrip {
  height: 30px;
  flex: none;
  display: flex;
  align-items: flex-end;
  padding-left: 70px;
  background: #e9e9e9;
  border-bottom: 1px solid #c9c9c9;
}

.tab {
  width: 231px;
  height: 30px;
  margin-bottom: -1px;
  box-sizing: border-box;
  display: flex;
  align-items: center;
  padding-left: 9px;
  background: #fff;
  border: 1px solid #c9c9c9;
  border-bottom: none;
}

.tab-title {
  width: 175px;
  margin-left: 4px;
  font-size: 12px;
  line-height: 18px;
  white-space: nowrap;
  overflow: hidden;
  color: #555;
}

.tab-x {
  margin-left: 8px;
}

.tab-plus {
  margin: 0 0 8px 10px;
}

.win-btns {
  margin-left: auto;
  display: flex;
  align-items: center;
  gap: 22px;
  height: 30px;
  padding-right: 11px;
}

/* address bar */
.toolbar {
  height: 35px;
  padding-top: 1px;
  flex: none;
  display: flex;
  align-items: center;
  background: #fff;
  border-bottom: 2px solid #e3e3e3;
}

.nav-btns {
  display: grid;
  grid-template-columns: repeat(5, 36px);
  margin-left: 62px;
  justify-items: center;
  align-items: center;
}

.divider {
  display: block;
  width: 1px;
  height: 26px;
  background: #ddd;
  flex: none;
}

.url-divider {
  margin-left: 12px;
}

.globe {
  margin-left: 9px;
}

.url {
  margin-left: 4px;
  width: 330px;
  font: 16.8px/22px "Liberation Sans", sans-serif;
  color: #8c8078;
  white-space: nowrap;
}

.url b {
  font-weight: 400;
  color: #111;
}

.tools-mid {
  position: absolute;
  left: 736px;
  top: 34px;
  height: 32px;
  display: flex;
  align-items: center;
}

.tools-mid svg:nth-child(2) {
  margin-left: 11px;
}

.tools-mid svg:nth-child(3) {
  margin-left: 11px;
}

.tools-mid .divider {
  margin-left: 15px;
}

.hot-search {
  width: 145px;
  margin-left: 11px;
  font-size: 14px;
  line-height: 20px;
  white-space: nowrap;
  color: #555;
}

.mag {
  margin-left: 22px;
}

.tools-mid .mag + .divider {
  margin-left: 13px;
}

.tools-ext {
  position: absolute;
  left: 1030px;
  top: 34px;
  height: 32px;
  display: flex;
  align-items: center;
  gap: 11px;
}

.ext {
  display: flex;
  align-items: center;
  gap: 6px;
}

.apps {
  margin-left: 7px;
}

.phone {
  margin-left: 15px;
}

.undo {
  margin-left: 8px;
  gap: 3px;
}

.menu {
  margin-left: 3px;
}

.caret {
  width: 0;
  height: 0;
  margin-top: 4px;
  border: 3px solid transparent;
  border-top: 4px solid #999;
  border-bottom: none;
}

.badge-4 {
  font: 700 9px "Liberation Sans", sans-serif;
  fill: #fff;
  text-anchor: middle;
}

.yen {
  font: 700 11px "Liberation Sans", sans-serif;
  fill: #fff;
  text-anchor: middle;
}

.logo {
  position: absolute;
  left: 12px;
  top: 7px;
}

.level-badge {
  position: absolute;
  left: 699px;
  top: -30px;
  width: 46px;
  height: 46px;
  box-sizing: content-box;
  border: 1px solid #c6cfc6;
  border-radius: 50%;
  background: #47c65f;
  box-shadow: 0 1px 3px #777;
  color: #fff;
  font: 700 12px/74px "Liberation Sans", sans-serif;
  text-align: center;
}

/* body */
.body {
  flex: 1;
  min-height: 0;
  display: flex;
}

.rail {
  width: 40px;
  flex: none;
  display: flex;
  flex-direction: column;
  background: #f3f4f4;
  border-right: 1px solid #e4e4e4;
}

.rail-icons {
  display: flex;
  flex-direction: column;
  gap: 17px;
  padding: 19px 0 0 5px;
}

.airmail {
  width: 28px;
  height: 28px;
  box-sizing: border-box;
  background: repeating-linear-gradient(45deg, #f05a4a 0 3px, #fff 3px 5px, #4fa9ef 5px 8px, #fff 8px 10px);
  border: 2px solid transparent;
  background-clip: border-box;
  box-shadow: inset 0 0 0 24px #fff;
  text-align: center;
  font: 700 17px/24px "Liberation Sans", sans-serif;
  color: #ee5140;
}

.rail-plus {
  margin: auto auto 7px;
}

.right-col {
  flex: 1;
  min-width: 0;
  display: flex;
  flex-direction: column;
}

.viewport {
  flex: 1;
  min-height: 0;
  display: flex;
}

.page {
  position: relative;
  flex: 1;
  min-width: 0;
  overflow: hidden;
  background: #fff;
}

.column {
  width: 1012px;
  height: 100%;
  box-sizing: border-box;
  border-right: 1px solid #e6e6e6;
}

.cad-top {
  margin-left: 374px;
}

.cad-small text {
  font: 11px "Liberation Sans", sans-serif;
}

.cad-small .cad-edge {
  font-size: 8px;
}

.cad-big text {
  font: 300 23px Roboto, "Liberation Sans", sans-serif;
  fill: #f0f0f0;
}

.shot-wrap {
  position: relative;
  width: 705px;
  height: 425px;
  margin-left: 49px;
}

.shot {
  position: relative;
  width: 705px;
  height: 425px;
  display: flex;
  flex-direction: column;
  overflow: hidden;
  background: #fff;
  filter: blur(0.45px);
  font-size: 5px;
  line-height: 8px;
  color: #222;
}

.sw-title {
  height: 4px;
  flex: none;
  background: linear-gradient(90deg, #2f7ac0 0, #2a6fb5 68%, #e7e2a0 71%, #2f7bbf 73%, #2a70b4 95%, #d87d55 100%);
}

.sw-row {
  display: flex;
  align-items: center;
  flex: none;
  white-space: nowrap;
  background: #f6f7f8;
}

.sw-menu {
  height: 11px;
  gap: 5.5px;
  padding-left: 9px;
}

.sw-login {
  margin-left: auto;
  padding-right: 5px;
  color: #333;
}

.sw-tools {
  height: 13px;
  gap: 3px;
  padding-left: 4px;
}

.sw-edit {
  padding-left: 5px;
}

.sw-tools span {
  display: flex;
  align-items: center;
}

.sw-tools .muted {
  color: #999;
}

.sw-tools .ico::before {
  content: "";
  width: 5px;
  height: 5px;
  margin-right: 3px;
  background: #d9dde1;
}

.sw-tools .ico-blue::before {
  background: #3f8fd6;
}

.sw-tools .boxed {
  width: 25px;
  height: 9px;
  justify-content: center;
  background: #fff;
  border: 1px solid #c4c8cc;
  box-sizing: border-box;
}

.sw-tools .select {
  width: 25px;
  height: 9px;
  background: #fff;
  margin-left: 0;
}

.sw-tools .m2 {
  margin-left: 2px;
}

.sw-tools .m4 {
  margin-left: 4px;
}

.sw-tools .m6 {
  margin-left: 6px;
}

.sw-body {
  flex: 1;
  min-height: 0;
  display: flex;
}

.sw-left {
  width: 72px;
  flex: none;
  border-right: 3px solid #e6e6e6;
}

.sw-search {
  height: 12px;
  display: flex;
  align-items: center;
  justify-content: space-between;
  padding: 0 3px 0 0;
  background: #eef0f2;
  color: #999;
}

.sw-search span {
  width: 60px;
  height: 9px;
  background: #fff;
}

.sw-search i {
  width: 4px;
  height: 4px;
  border: 1px solid #4a9ad8;
  border-radius: 50%;
}

.tree {
  margin: 0;
  padding: 0;
  list-style: none;
  font-feature-settings: "palt";
}

.tree li {
  position: relative;
  height: 6.67px;
  display: flex;
  align-items: center;
  margin-left: 9px;
  padding-left: 5px;
  line-height: 6.67px;
  white-space: nowrap;
  border-left: 1px dotted #bbb;
}

.tree li i {
  width: 4px;
  height: 4px;
  margin-right: 4px;
  flex: none;
  border-radius: 50%;
  background: #8f8c14;
}

.tree .tree-root {
  margin-left: 5px;
  padding-left: 1px;
  border-left: none;
  font-weight: 700;
}

.tree-root b {
  width: 0;
  height: 0;
  margin-right: 3px;
  border: 3px solid transparent;
  border-top: 5px solid #2d8bd8;
  border-bottom: none;
}

.tree .sel i {
  box-shadow: 0 0 0 2px #2a6fc8;
}

.tree .sel span {
  padding: 0 4px;
  margin-left: -4px;
  background: #2a6fc8;
  color: #dfe8f5;
}

.sw-main {
  flex: 1;
  min-width: 0;
}

.prop-tab {
  height: 9px;
  box-sizing: border-box;
  border-bottom: 1px solid #bbb;
  background: #eff1f3;
}

.prop-tab span {
  display: block;
  width: 25px;
  height: 8px;
  text-align: center;
  background: #fff;
  border: 1px solid #bbb;
  border-bottom: none;
  box-sizing: border-box;
  line-height: 7px;
}

.prop-table {
  width: 155px;
  margin-top: 1px;
  border-top: 1px solid #ddd;
  border-left: 1px solid #ddd;
}

.prop-row {
  display: grid;
  grid-template-columns: 9px 80px 53px 13px;
  height: 8px;
  line-height: 8px;
  box-sizing: border-box;
  border-bottom: 1px solid #e2e2e2;
}

.prop-row span {
  border-right: 1px solid #e2e2e2;
  overflow: hidden;
  white-space: nowrap;
}

.prop-head {
  height: 9px;
  background: #f3f4f6;
  text-align: center;
}

.head-val {
  background: linear-gradient(#fbdca0, #f3bd60);
  color: #664;
}

.prop-no {
  text-align: center;
  background: #f4f5f6;
}

.prop-name {
  padding-left: 9px;
}

.prop-name em {
  font-style: normal;
  margin: 0 3px 0 -7px;
}

.prop-val {
  padding-left: 1px;
}

.blue .prop-name {
  color: #3333e8;
}

.dark .prop-name {
  color: #222;
}

.gray .prop-name,
.gray .prop-val {
  color: #a0a0a0;
}

.picked .prop-no {
  background: #f8c574;
}

.picked .prop-name {
  background: #3a96ea;
  color: #e8f2fc;
}

.picked .prop-val {
  background: #dcedfb;
}

.prop-chk {
  display: flex;
  align-items: center;
  justify-content: center;
}

.prop-chk i {
  width: 4px;
  height: 4px;
  border: 1px solid #aaa;
  background: #f2f2f2;
}

.sw-status {
  height: 9px;
  flex: none;
  display: flex;
  gap: 8px;
  padding-left: 9px;
  align-items: center;
  background: #f2f3f4;
  border-top: 2px solid #dadada;
  box-sizing: border-box;
  white-space: nowrap;
}

/* stirrup dialog */
.dialog {
  position: absolute;
  left: 71px;
  top: 165px;
  width: 196px;
  height: 151px;
  box-sizing: border-box;
  display: flex;
  flex-direction: column;
  padding: 0 3px 3px;
  border: 1px solid #4a4a46;
  border-radius: 2px;
  background: linear-gradient(#dbe9bd, #a9cf76);
  box-shadow: 0 0 3px #333;
}

.dialog-title {
  height: 12px;
  flex: none;
  line-height: 12px;
  color: #333;
  position: relative;
}

.dialog-title i {
  position: absolute;
  right: 1px;
  top: 0;
  width: 21px;
  height: 6px;
  background: #cf6a5c;
}

.dialog-inner {
  flex: 1;
  min-height: 0;
  display: flex;
  flex-direction: column;
  background: #fff;
  padding-left: 1px;
}

.st-row {
  display: grid;
  grid-template-columns: 9px 25px 51px 84px;
  white-space: nowrap;
  align-items: center;
  text-align: center;
  border-bottom: 1px solid #e6e6e6;
}

.st-head {
  height: 8px;
  background: #f2f3f5;
}

.st-hl {
  align-self: stretch;
  background: #f8cd85;
  color: #a34a2a;
}

.st-one {
  height: 14px;
}

.st-two {
  height: 11px;
}

.st-idx {
  align-self: stretch;
  display: flex;
  align-items: center;
  justify-content: center;
  background: #f2f3f5;
}

.st-one .st-idx {
  background: #f8cd85;
}

.st-one .st-no {
  align-self: stretch;
  line-height: 14px;
  background: #dcedfb;
}

.st-shape {
  display: flex;
  align-items: center;
  justify-content: center;
  gap: 4px;
}

.st-shape small {
  font-size: 5px;
}

.st-hook {
  position: relative;
}

.st-hook small {
  position: absolute;
  left: 38px;
  top: 2px;
}

.st-red {
  font: 5px "Liberation Sans", sans-serif;
  fill: #e22;
}

.dialog-space {
  flex: 1;
  border-bottom: 1px solid #ddd;
}

.dialog-btns {
  height: 19px;
  flex: none;
  display: flex;
  align-items: center;
  padding-left: 1px;
  gap: 3px;
  background: #f2f2f2;
}

.dialog-btns button {
  width: 30px;
  height: 11px;
  padding: 0;
  font: inherit;
  color: #444;
  background: #ececec;
  border: 1px solid #aaa;
  border-radius: 1px;
}

.dialog-btns .ok {
  margin-left: 19px;
  border-color: #6aa8d8;
  background: #e4f1fa;
}

/* section window */
.section-win {
  position: absolute;
  left: 275px;
  top: 44px;
  width: 367px;
  height: 339px;
  box-sizing: border-box;
  display: flex;
  flex-direction: column;
  padding: 0 4px;
  background: #dbe6ef;
  border: 1px solid #a4b6c6;
}

.section-title {
  height: 12px;
  flex: none;
  line-height: 13px;
  color: #666;
}

.section-tools {
  height: 25px;
  flex: none;
  background: #fbfbfb;
}

.section-row {
  height: 13px;
  display: flex;
  align-items: center;
  gap: 4.5px;
  padding-left: 5px;
  white-space: nowrap;
  color: #222;
}

.section-row .muted {
  color: #aaa;
}

.section-row2 {
  height: 12px;
  gap: 1px;
}

.section-row2 i {
  width: 55px;
  height: 8px;
  margin-left: 1px;
  background: #fff;
  border: 1px solid #aaa;
  box-sizing: border-box;
}

.section-canvas {
  margin-left: 1px;
}

.cad-label text {
  font: 36px "Liberation Serif", serif;
}

.cad-label .cad-cjk {
  font: 36px "Noto Sans CJK SC", sans-serif;
  letter-spacing: 2px;
}

.cad-tiny text {
  font: 12px "Liberation Sans", sans-serif;
}

.section-status {
  flex: 1;
  padding-left: 4px;
  line-height: 13px;
  color: #555;
}

/* red markup */
.markup-box {
  position: absolute;
  left: 58px;
  top: 172px;
  width: 208px;
  height: 55px;
  box-sizing: border-box;
  border: 2px solid #f23030;
}

.markup-arrow {
  position: absolute;
  left: 0;
  top: 0;
}

.markup-text {
  position: absolute;
  left: 353px;
  top: 386px;
  color: #ee0000;
  font-size: 19px;
  font-weight: 700;
  line-height: 24px;
  letter-spacing: 3.6px;
  white-space: nowrap;
}

/* share circles */
.share-row {
  display: flex;
  gap: 47px;
  margin: 41px 0 0 287px;
}

.share {
  width: 74px;
  height: 74px;
  flex: none;
  display: flex;
  justify-content: center;
  padding-top: 9px;
  box-sizing: border-box;
  border-radius: 50%;
}

.share-pink {
  background: #ffd6dd;
}

.share-amber {
  background: #ffebc8;
}

.share-blue {
  background: #d2edfd;
}

.share-green {
  background: #dcf7e2;
}

/* floating buttons */
.floats {
  position: absolute;
  right: 22px;
  top: 299px;
  width: 44px;
  display: flex;
  flex-direction: column;
  gap: 11px;
}

.floats a {
  height: 44px;
  display: block;
  background: #ff6600;
  color: #fff;
  font-size: 15px;
  line-height: 19px;
  padding-top: 1px;
  box-sizing: border-box;
  text-align: center;
}

.floats .float-top {
  display: flex;
  align-items: center;
  justify-content: center;
  padding: 0;
  background: #bfbfbf;
}

.vscroll {
  width: 17px;
  flex: none;
  background: #f0f0f0;
}

.vthumb {
  width: 13px;
  height: 125px;
  margin: 269px 0 0 2px;
  background: #c0c0c0;
}

.hscroll {
  height: 16px;
  flex: none;
  display: flex;
  align-items: center;
  background: #f0f0f0;
}

.arrow-l,
.arrow-r {
  width: 0;
  height: 0;
  border: 4px solid transparent;
}

.arrow-l {
  margin-left: 4px;
  border-right: 4px solid #999;
  border-left: none;
}

.arrow-r {
  margin-left: 48px;
  border-left: 4px solid #444;
  border-right: none;
}

.hthumb {
  width: 1233px;
  height: 13px;
  margin-left: 8px;
  background: #bfbfbf;
}

/* status bar */
.statusbar {
  height: 24px;
  flex: none;
  display: flex;
  align-items: center;
  box-sizing: border-box;
  border-top: 2px solid #d4d4d4;
  padding-left: 10px;
  background: #fff;
  font-size: 12px;
  line-height: 16px;
  color: #666;
  white-space: nowrap;
}

.today {
  margin-left: 7px;
}

.news-chev {
  margin-left: 29px;
}

.news {
  margin-left: 7px;
  color: #444;
  text-decoration: underline;
}

.status-right {
  position: absolute;
  left: 839px;
  bottom: 40px;
  height: 22px;
  display: flex;
  align-items: center;
}

.st-item {
  display: flex;
  align-items: center;
  gap: 6px;
  margin-right: 13px;
}

.st-down {
  margin: 0 0 0 19px;
  gap: 7px;
}

.g1 {
  margin-left: 2px;
}

.g2 {
  margin-left: 20px;
}

.g3 {
  margin-left: 15px;
}

.g4 {
  margin-left: 22px;
}

.g5 {
  margin-left: 22px;
}

.g6 {
  margin-left: 17px;
}

.zoom-level {
  margin-left: 8px;
  font: 13px "Liberation Sans", sans-serif;
  color: #777;
}

/* taskbar */
.taskbar {
  height: 40px;
  flex: none;
  display: flex;
  background: #02090d;
  color: #eee;
}

.start {
  width: 48px;
  flex: none;
  display: flex;
  align-items: center;
  justify-content: center;
  background: #000;
}

.cortana {
  width: 343px;
  flex: none;
  display: flex;
  align-items: center;
  padding-left: 9px;
  box-sizing: border-box;
  background: #333;
  color: #8f8f8f;
  font-size: 14px;
}

.cortana span {
  margin-left: 6px;
}

.mic {
  margin-left: 113px;
}

.pins-a {
  display: grid;
  grid-template-columns: repeat(4, 50px);
  margin-right: 5px;
}

.pins-b {
  display: grid;
  grid-template-columns: repeat(7, 41.6px);
}

.pin {
  position: relative;
  display: flex;
  align-items: center;
  justify-content: center;
  height: 40px;
}

.run::after {
  content: "";
  position: absolute;
  left: 6px;
  right: 6px;
  bottom: 0;
  height: 2px;
  background: #76b9ed;
}

.active {
  background: #2a3336;
}

.active::after {
  left: 0;
  right: 0;
}

.tray {
  display: grid;
  grid-template-columns: 48px 71px repeat(6, 24px) 30px 26px 32px 78px 34px;
  align-items: center;
  justify-items: center;
  height: 40px;
  font-size: 13px;
}

.tray-text {
  font-size: 12px;
  color: #ddd;
}

.tray-cpu {
  padding-right: 5px;
  text-align: center;
  line-height: 18px;
}

.tray-ime {
  font-size: 14px;
  color: #fff;
}

.tray-clock {
  text-align: center;
  line-height: 18px;
  white-space: nowrap;
}

.tray-note {
  position: relative;
  width: 24px;
  height: 30px;
  display: flex;
  justify-content: center;
  padding-top: 4px;
  box-sizing: border-box;
}

.tray-note b {
  position: absolute;
  left: 9px;
  top: 13px;
  width: 16px;
  height: 16px;
  border-radius: 50%;
  background: #3a3a3a;
  border: 1px solid #111;
  box-sizing: border-box;
  font: 700 11px/14px "Liberation Sans", sans-serif;
  text-align: center;
  color: #fff;
}
</style>
